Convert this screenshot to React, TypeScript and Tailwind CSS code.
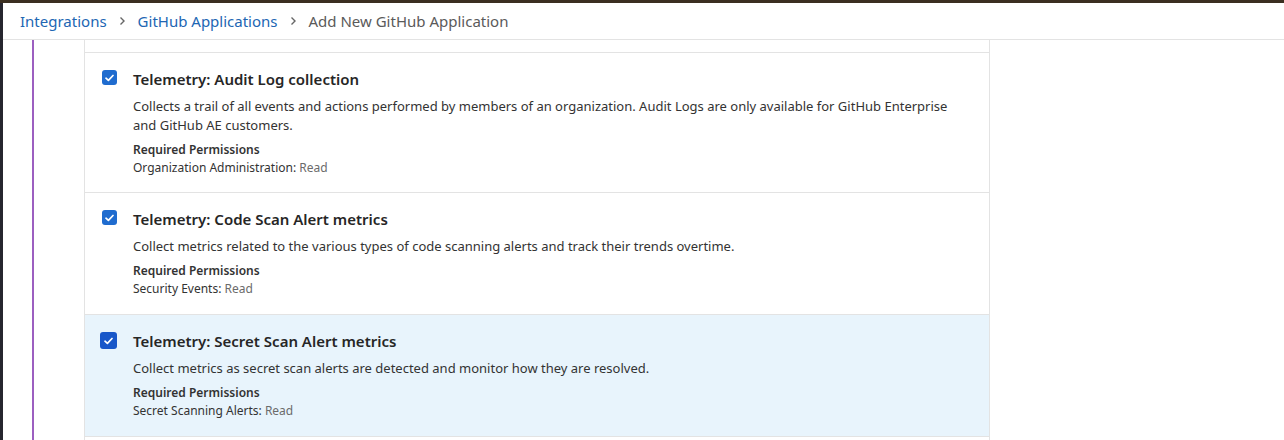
import React from "react";

const rows = [
  {
    title: "Telemetry: Audit Log collection",
    desc: "Collects a trail of all events and actions performed by members of an organization. Audit Logs are only available for GitHub Enterprise and GitHub AE customers.",
    perm: "Organization Administration",
  },
  {
    title: "Telemetry: Code Scan Alert metrics",
    desc: "Collect metrics related to the various types of code scanning alerts and track their trends overtime.",
    perm: "Security Events",
  },
  {
    title: "Telemetry: Secret Scan Alert metrics",
    desc: "Collect metrics as secret scan alerts are detected and monitor how they are resolved.",
    perm: "Secret Scanning Alerts",
    active: true,
  },
];

const Chevron = () => (
  <svg width="7" height="10" viewBox="0 0 7 10" className="mx-[12px] text-[#666]">
    <path d="M1.5 1.5 5 5l-3.5 3.5" fill="none" stroke="currentColor" strokeWidth="1.4" />
  </svg>
);

const Check = ({ big }: { big?: boolean }) => (
  <div
    className={
      big
        ? "mt-[1px] -ml-[2px] w-[17px] h-[17px] rounded-[3px] bg-[#1857c9] flex items-center justify-center shrink-0"
        : "mt-[1px] w-[15px] h-[15px] rounded-[3px] bg-[#1f6ccf] flex items-center justify-center shrink-0"
    }
  >
    <svg width="9" height="8" viewBox="0 0 9 8">
      <path d="M1 4.2 3.4 6.4 8 1.5" fill="none" stroke="white" strokeWidth="1.7" strokeLinecap="round" strokeLinejoin="round" />
    </svg>
  </div>
);

export default function App() {
  return (
    <div className="w-[1284px] h-[440px] overflow-hidden bg-white flex flex-col font-['Noto_Sans',sans-serif]">
      <div className="h-[3px] bg-[#3b2f21] shrink-0" />
      <div className="flex flex-1 min-h-0">
        <div className="w-[3px] bg-[#26262f] shrink-0" />
        <div className="flex-1 flex flex-col min-h-0">
          <div className="h-[37px] shrink-0 border-b border-[#e3e3e3] flex items-center pl-[17px] text-[15px]">
            <span className="text-[#2166b3]">Integrations</span>
            <Chevron />
            <span className="text-[#2166b3]">GitHub Applications</span>
            <Chevron />
            <span className="text-[#5a5a5a]">Add New GitHub Application</span>
          </div>
          <div className="flex flex-1 min-h-0">
            <div className="ml-[29px] w-[2px] bg-[#9c5fc0] shrink-0" />
            <div className="ml-[50px] w-[906px] border-x border-[#e3e3e3] flex flex-col">
              <div className="h-[12px] shrink-0" />
              {rows.map((r, i) => (
                <div
                  key={r.title}
                  className={
                    "flex gap-[16px] pl-[17px] pr-6 pt-4 border-t border-[#e3e3e3] shrink-0 " +
                    (i === 0 ? "pb-[15px] " : "pb-4 ") +
                    (r.active ? "bg-[#e8f4fc]" : "bg-white")
                  }
                >
                  <Check big={r.active} />
                  <div className="flex flex-col text-[#2b2b2b]">
                    <div className="text-[15px] leading-[20px] font-semibold text-[#262626]">{r.title}</div>
                    <div className="mt-2 text-[13px] leading-[19px] text-[#333]">{r.desc}</div>
                    <div className="mt-1.5 text-[12px] leading-[18px] font-semibold text-[#333]">Required Permissions</div>
                    <div className="text-[12px] leading-[18px] text-[#333]">
                      {r.perm}: <span className="text-[#6b6b6b]">Read</span>
                    </div>
                  </div>
                </div>
              ))}
              <div className="border-t border-[#e3e3e3] flex-1" />
            </div>
          </div>
        </div>
      </div>
    </div>
  );
}
